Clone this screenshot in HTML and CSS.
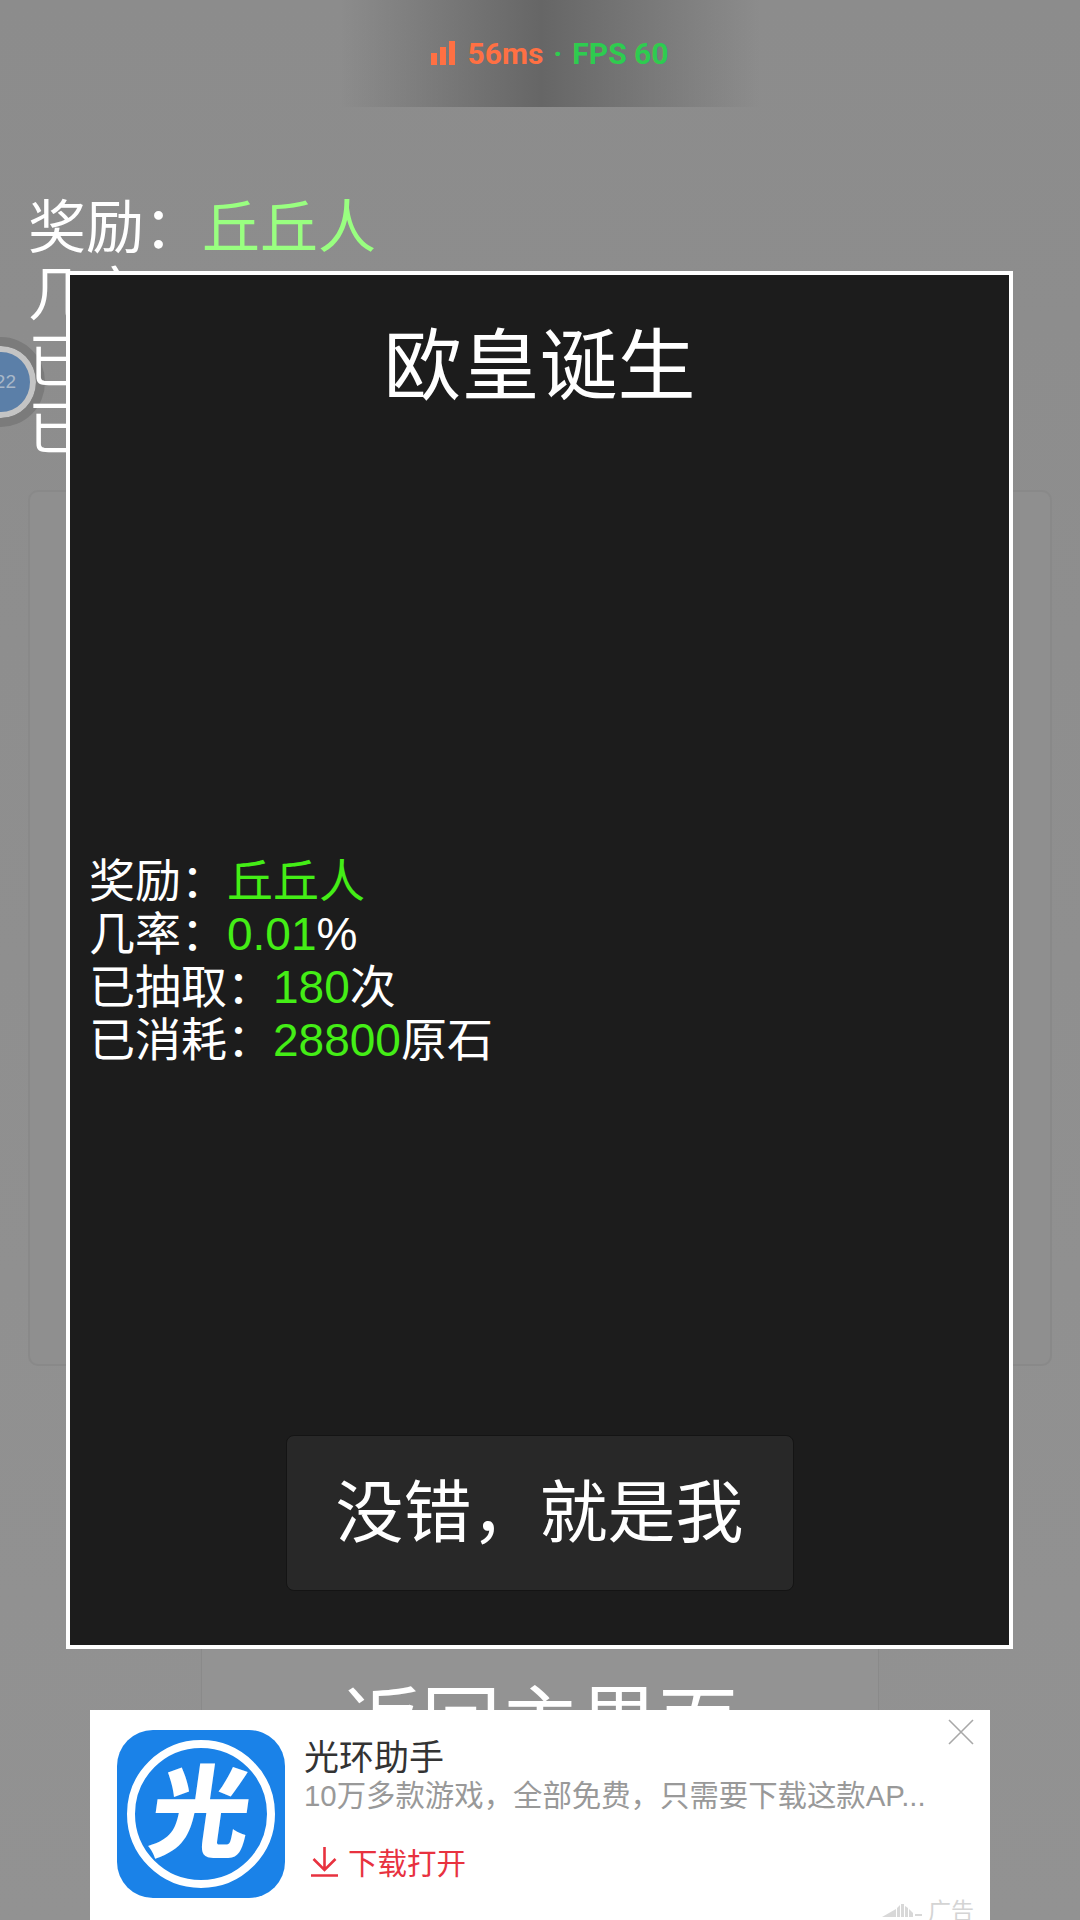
FILE: index.html
```html
<!DOCTYPE html>
<html lang="zh-CN">
<head>
    <meta charset="UTF-8">
    <meta name="viewport" content="width=device-width, initial-scale=1.0">
    <title>欧皇诞生</title>
    <link rel="stylesheet" href="styles.css">
</head>
<body>
    <div id="page">
        <!-- 背景页面 -->
        <div class="stats">
            <div>奖励：<span class="hit-bg">丘丘人</span></div>
            <div>几率：<span class="hit-bg">0.01</span>%</div>
            <div>已抽取：<span class="hit-bg">180</span>次</div>
            <div>已消耗：<span class="hit-bg">28800</span>原石</div>
        </div>
        <div class="panel"></div>
        <button class="back-btn">返回主界面</button>

        <!-- 网络状态 -->
        <div class="net-bar">
            <div class="net-info">
                <svg class="net-icon" width="24" height="24" viewBox="0 0 24 24">
                    <rect x="0" y="12" width="6" height="12" fill="#ff7043"/>
                    <rect x="9" y="6" width="6" height="18" fill="#ff7043"/>
                    <rect x="18" y="0" width="6" height="24" fill="#ff7043"/>
                </svg>
                <span class="ping">56ms</span>
                <span class="dot">·</span>
                <span class="fps">FPS 60</span>
            </div>
        </div>

        <!-- 悬浮球 -->
        <div class="float-ball"><span>22</span></div>

        <!-- 弹窗 -->
        <div class="modal">
            <h1>欧皇诞生</h1>
            <div class="modal-stats">
                <div>奖励：<span class="hit">丘丘人</span></div>
                <div>几率：<span class="hit">0.01</span>%</div>
                <div>已抽取：<span class="hit">180</span>次</div>
                <div>已消耗：<span class="hit">28800</span>原石</div>
            </div>
            <button class="confirm-btn">没错，就是我</button>
        </div>

        <!-- 广告 -->
        <div class="ad">
            <div class="ad-logo">
                <div class="ad-ring"><span>光</span></div>
            </div>
            <div class="ad-body">
                <div class="ad-title">光环助手</div>
                <div class="ad-desc">10万多款游戏，全部免费，只需要下载这款AP...</div>
                <div class="ad-download">
                    <svg width="27" height="30" viewBox="0 0 27 30" fill="none" stroke="#e8323f" stroke-width="2.6">
                        <path d="M13.5 0V23M2.5 12L13.5 23L24.5 12M0 28.5H27"/>
                    </svg>
                    <span>下载打开</span>
                </div>
            </div>
            <svg class="ad-close" width="26" height="26" viewBox="0 0 26 26" stroke="#a8a8a8" stroke-width="1.6">
                <path d="M1 1L25 25M25 1L1 25"/>
            </svg>
            <div class="ad-mark">
                <svg width="40" height="16" viewBox="0 0 40 16" fill="#d8d8d8">
                    <path d="M0 14L14 6V14ZM15 5L18 2V14H15ZM19 1L22 1V14H19ZM23 3L26 5V14H23ZM27 6L31 10V14H27ZM33 11H40V13H33Z"/>
                </svg>
                <span>广告</span>
            </div>
        </div>
    </div>
</body>
</html>
```

FILE: styles.css
```css
* {
    box-sizing: border-box;
}
body {
    margin: 0;
    font-family: "Liberation Sans", "Noto Sans CJK SC", sans-serif;
    color: white;
}
#page {
    position: relative;
    width: 1080px;
    height: 1920px;
    overflow: hidden;
    padding: 194px 28px 0;
    background: linear-gradient(#8c8c8c, #929292);
}
.stats {
    position: relative;
    z-index: 1;
    font-size: 58px;
    line-height: 67px;
}
.hit-bg {
    color: #99ff80;
}
.panel {
    height: 876px;
    margin-top: 28px;
    background: #8f8f8f;
    border: 2px solid #898989;
    border-radius: 10px;
}
.back-btn {
    display: block;
    width: 678px;
    height: 194px;
    margin: 254px auto 0;
    padding: 0;
    background: #939393;
    border: 1px solid #8a8a8a;
    border-radius: 6px;
    color: white;
    font-family: inherit;
    font-size: 79px;
}

.net-bar {
    position: absolute;
    top: 0;
    left: 340px;
    width: 420px;
    height: 107px;
    display: flex;
    justify-content: center;
    padding-top: 36px;
    background: linear-gradient(90deg, rgba(95, 95, 95, 0), #666 48%, rgba(95, 95, 95, 0));
}
.net-info {
    display: flex;
    align-items: flex-start;
    height: 36px;
    font-family: Roboto, sans-serif;
    font-size: 30px;
    font-weight: 700;
    line-height: 36px;
}
.net-icon {
    margin-top: 5px;
    margin-right: 12px;
}
.ping {
    color: #ff7043;
}
.dot {
    margin: 0 10px;
    color: #2ecc4f;
}
.fps {
    color: #2ecc4f;
}

.float-ball {
    position: absolute;
    top: 346px;
    left: -34px;
    width: 70px;
    height: 72px;
    display: flex;
    align-items: center;
    justify-content: flex-end;
    padding-right: 14px;
    background: #5b7fa8;
    border: 6px solid #c4c4c4;
    outline: 9px solid #7b7b7b;
    border-radius: 50%;
    font-size: 19px;
    color: #a9b8c9;
}

.modal {
    position: absolute;
    z-index: 2;
    top: 271px;
    left: 66px;
    width: 947px;
    height: 1378px;
    display: flex;
    flex-direction: column;
    align-items: center;
    padding-top: 46px;
    background: #1c1c1c;
    border: 4px solid white;
}
.modal h1 {
    margin: 0;
    font-size: 78px;
    font-weight: 400;
    line-height: 92px;
}
.modal-stats {
    align-self: flex-start;
    margin-top: 442px;
    margin-left: 19px;
    font-size: 46px;
    line-height: 53px;
}
.hit {
    color: #44ee16;
}
.confirm-btn {
    width: 508px;
    height: 156px;
    margin-top: auto;
    margin-bottom: 54px;
    padding: 0 0 12px;
    background: #282828;
    border: 1px solid #141414;
    border-radius: 8px;
    color: white;
    font-family: inherit;
    font-size: 68px;
}

.ad {
    position: absolute;
    z-index: 3;
    top: 1710px;
    left: 90px;
    width: 900px;
    height: 210px;
    display: flex;
    gap: 19px;
    padding: 20px 27px;
    background: white;
}
.ad-logo {
    width: 168px;
    height: 168px;
    flex-shrink: 0;
    padding: 10px;
    background: #1a82e8;
    border-radius: 36px;
}
.ad-ring {
    width: 148px;
    height: 148px;
    display: flex;
    align-items: center;
    justify-content: center;
    border: 8px solid white;
    border-radius: 50%;
    color: white;
    font-size: 100px;
    font-weight: 900;
    line-height: 1;
}
.ad-ring span {
    transform: skewX(-8deg);
}
.ad-body {
    width: 640px;
}
.ad-title {
    margin-top: 7px;
    color: #333;
    font-size: 35px;
    line-height: 42px;
}
.ad-desc {
    color: #999;
    font-size: 29.4px;
    line-height: 34px;
    white-space: nowrap;
}
.ad-download {
    display: flex;
    align-items: center;
    gap: 10px;
    margin-top: 33px;
    margin-left: 7px;
    color: #e8323f;
    font-size: 29.5px;
    line-height: 36px;
}
.ad-download svg {
    margin-bottom: 4px;
}
.ad-close {
    position: absolute;
    top: 9px;
    right: 16px;
}
.ad-mark {
    position: absolute;
    top: 186px;
    right: 16px;
    display: flex;
    align-items: center;
    gap: 6px;
    color: #d4d4d4;
    font-size: 23px;
    line-height: 30px;
}
```
